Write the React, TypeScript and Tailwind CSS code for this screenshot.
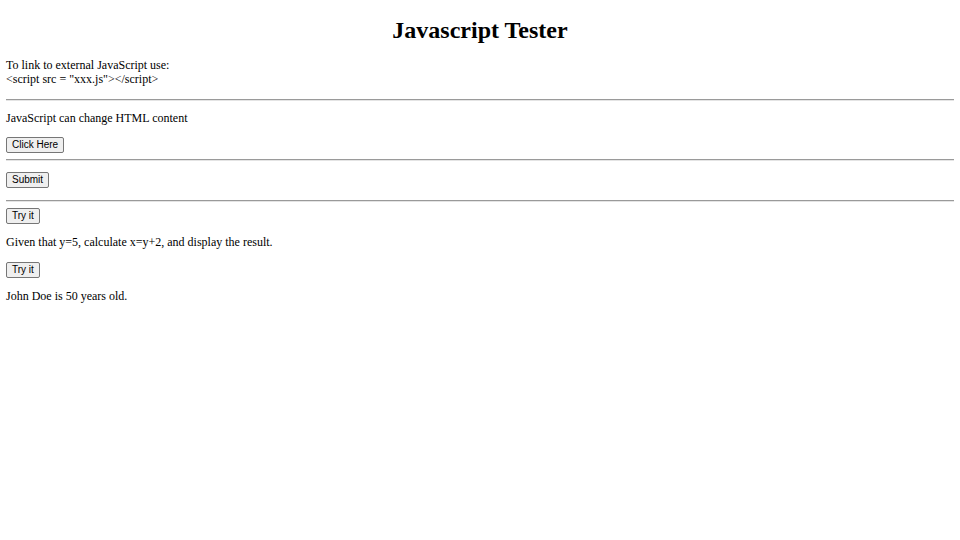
export default function App() {
  const btn =
    "h-[16px] px-[5px] text-[10px] leading-none bg-[#efefef] border border-[#767676] rounded-[2px] text-black [font-family:'Liberation_Sans',Arial,sans-serif]";
  const hr = "w-full h-[2px] border-t border-t-[#9a9a9a] border-b border-b-[#e4e4e4]";
  const p = "text-[12px] leading-[13.8px]";

  return (
    <div className="min-h-[540px] w-[960px] bg-white px-[6px] text-black [font-family:'Liberation_Serif','Times_New_Roman',serif]">
      <div className="flex flex-col items-start">
        <h1 className="mt-[16px] w-full text-center text-[24px] leading-[28px] font-bold">Javascript Tester</h1>
        <p className={`mt-[15px] ${p}`}>
          To link to external JavaScript use:
          <br />
          {'<script src = "xxx.js"></script>'}
        </p>
        <div className={`mt-[12px] ${hr}`} />
        <p className={`mt-[11px] ${p}`}>JavaScript can change HTML content</p>
        <button className={`mt-[12px] ${btn}`}>Click Here</button>
        <div className={`mt-[6px] ${hr}`} />
        <button className={`mt-[11px] ${btn}`}>Submit</button>
        <div className={`mt-[12px] ${hr}`} />
        <button className={`mt-[6px] ${btn}`}>Try it</button>
        <p className={`mt-[12px] ${p}`}>Given that y=5, calculate x=y+2, and display the result.</p>
        <button className={`mt-[12px] ${btn}`}>Try it</button>
        <p className={`mt-[12px] ${p}`}>John Doe is 50 years old.</p>
      </div>
    </div>
  );
}
